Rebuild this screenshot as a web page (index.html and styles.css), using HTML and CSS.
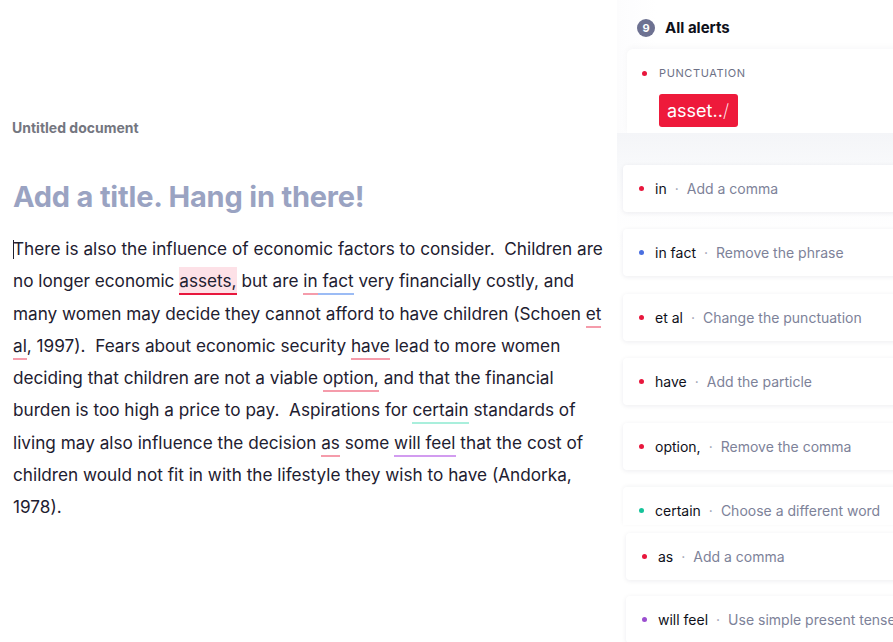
FILE: index.html
```html
<!DOCTYPE html>
<html>
<head>
<meta charset="utf-8">
<link rel="stylesheet" href="styles.css">
</head>
<body>
<div class="app">
  <main class="editor">
    <div class="doc-name">Untitled document</div>
    <h1 class="title">Add a title. Hang in there!</h1>
    <p class="body-text"><span class="caret"></span>There is also the influence of economic factors to consider.&nbsp; Children are no longer economic <span class="hl u-strong">assets,</span> but are <span class="u u-red">in</span><span class="u u-blue"> fact</span> very financially costly, and many women may decide they cannot afford to have children (Schoen <span class="u u-red">et</span> <span class="u u-red">al</span>, 1997).&nbsp; Fears about economic security <span class="u u-red">have</span> lead to more women deciding that children are not a viable <span class="u u-red">option,</span> and that the financial burden is too high a price to pay.&nbsp; Aspirations for <span class="u u-teal">certain</span> standards of living may also influence the decision <span class="u u-red">as</span> some <span class="u u-purple">will feel</span> that the cost of children would not fit in with the lifestyle they wish to have (Andorka, 1978).</p>
  </main>
  <aside class="sidebar">
    <div class="alerts-head">
      <span class="count">9</span>
      <span class="alerts-title">All alerts</span>
    </div>
    <div class="card-open">
      <div class="cat"><span class="dot red"></span>PUNCTUATION</div>
      <div class="fix-btn">asset..<span class="slash">/</span></div>
    </div>
    <div class="stack">
      <div class="card"><span class="dot red"></span><span class="word">in</span><span class="sep">·</span><span class="hint">Add a comma</span></div>
      <div class="card"><span class="dot blue"></span><span class="word">in fact</span><span class="sep">·</span><span class="hint">Remove the phrase</span></div>
      <div class="card"><span class="dot red"></span><span class="word">et al</span><span class="sep">·</span><span class="hint">Change the punctuation</span></div>
      <div class="card"><span class="dot red"></span><span class="word">have</span><span class="sep">·</span><span class="hint">Add the particle</span></div>
      <div class="card"><span class="dot red"></span><span class="word">option,</span><span class="sep">·</span><span class="hint">Remove the comma</span></div>
      <div class="card card-cut"><span class="dot green"></span><span class="word">certain</span><span class="sep">·</span><span class="hint">Choose a different word</span></div>
    </div>
    <div class="stack stack-2">
      <div class="card"><span class="dot red"></span><span class="word">as</span><span class="sep">·</span><span class="hint">Add a comma</span></div>
      <div class="card"><span class="dot purple"></span><span class="word">will feel</span><span class="sep">·</span><span class="hint">Use simple present tense</span></div>
    </div>
  </aside>
</div>
</body>
</html>
```
FILE: styles.css
```css
* { box-sizing: border-box; }
html, body { margin: 0; padding: 0; background: #fff; }
body { font-family: Inter, "Noto Sans", sans-serif; color: #1e2030; }

.app {
  display: flex;
  width: 893px;
  height: 642px;
  overflow: hidden;
}

.editor {
  width: 617px;
  flex: none;
  padding: 119px 4px 0 13px;
}
.doc-name {
  font-size: 14px;
  font-weight: 700;
  color: #74767f;
  margin-left: -1px;
  line-height: 18px;
}
.title {
  margin: 41px 0 0 0;
  font-size: 29px;
  line-height: 38px;
  font-weight: 700;
  color: #9aa3c2;
  letter-spacing: -0.2px;
}
.body-text {
  margin: 17px 0 0 0;
  font-size: 17.2px;
  line-height: 32.3px;
  color: #1e2030;
}
.caret {
  display: inline-block;
  width: 1px;
  height: 19px;
  background: #1e2030;
  vertical-align: -4px;
  margin-right: -1px;
}
.u { padding-bottom: 2px; border-bottom: 2px solid; }
.u-red { border-color: #f59cab; }
.u-blue { border-color: #9cbcf5; }
.u-teal { border-color: #a9efdc; }
.u-purple { border-color: #d29cf0; }
.hl { background: #fde1e7; padding-top: 3px; }
.u-strong { padding-bottom: 2px; border-bottom: 2px solid #e8173d; }

.sidebar {
  flex: 1;
  min-width: 0;
  position: relative;
  background: linear-gradient(to right, #fcfcfd, #fdfdfe 14px, #fff 40px);
}
.alerts-head {
  display: flex;
  align-items: flex-start;
  gap: 10px;
  padding: 19px 0 0 20px;
  height: 49px;
}
.count {
  width: 18px;
  height: 18px;
  border-radius: 50%;
  background: #6d7191;
  color: #fff;
  font-size: 11px;
  font-weight: 700;
  display: flex;
  align-items: center;
  justify-content: center;
}
.alerts-title {
  font-size: 15px;
  font-weight: 700;
  color: #0e101a;
  line-height: 18px;
}

.card-open {
  margin-left: 10px;
  width: 300px;
  height: 84px;
  background: #fff;
  border-radius: 6px 0 0 0;
  box-shadow: 0 -2px 6px rgba(20, 30, 60, 0.03);
  padding: 18px 0 0 15px;
}
.cat {
  display: flex;
  align-items: center;
  font-size: 11px;
  letter-spacing: 0.6px;
  color: #6d7186;
  line-height: 12px;
}
.cat .dot { margin-right: 12px; }
.fix-btn {
  margin: 15px 0 0 17px;
  display: inline-block;
  background: #ee1a3b;
  color: #fff;
  font-size: 18px;
  line-height: 33px;
  height: 33px;
  padding: 0 9px 0 8px;
  border-radius: 3px;
}
.slash { font-weight: 200; }

.stack {
  display: flex;
  flex-direction: column;
  gap: 17.4px;
  padding: 32px 0 0 6px;
  background: linear-gradient(#f4f5f8, #f8f9fb 32px, #fdfdfe 70px, #fff 120px);
}
.stack-2 {
  padding: 8px 0 0 9px;
  background: #fff;
  gap: 16px;
}
.card {
  width: 300px;
  height: 47px;
  flex: none;
  background: #fff;
  border-radius: 4px;
  box-shadow: 0 1px 5px rgba(20, 30, 60, 0.08);
  display: flex;
  align-items: center;
  padding-left: 16px;
  font-size: 14px;
  white-space: nowrap;
}
.card-cut {
  height: 38px;
  border-radius: 4px 4px 0 0;
  box-shadow: 0 -1px 4px rgba(20, 30, 60, 0.05);
  align-items: flex-start;
  padding-top: 15px;
}
.dot {
  width: 5px;
  height: 5px;
  border-radius: 50%;
  flex: none;
  display: inline-block;
}
.card .dot { margin-right: 11px; }
.card-cut .dot { margin-top: 6px; }
.red { background: #e8173d; }
.blue { background: #4a6fe0; }
.green { background: #15c39a; }
.purple { background: #9b4fd0; }
.word { color: #0e101a; }
.sep { color: #9a9db0; margin: 0 8px; }
.hint { color: #7d8299; }
```
